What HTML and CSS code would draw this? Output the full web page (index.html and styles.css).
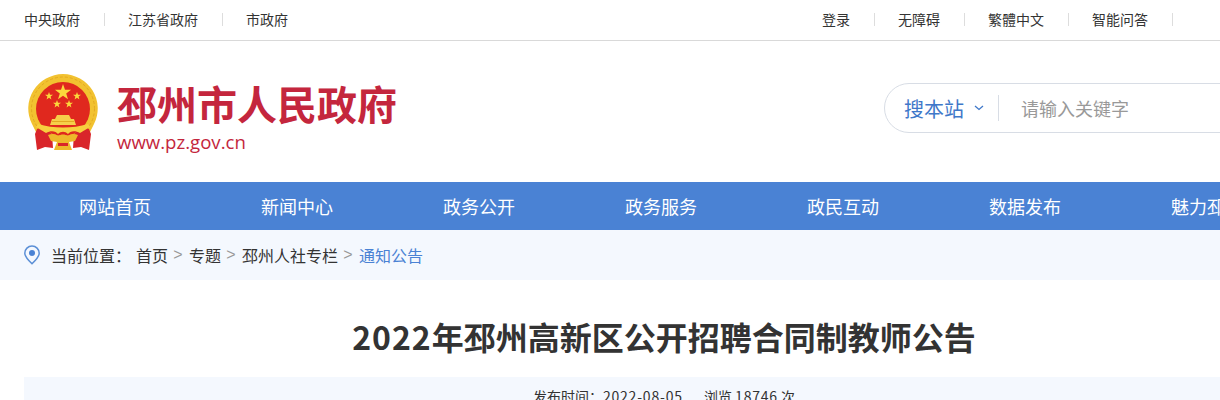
FILE: index.html
```html
<!DOCTYPE html>
<html lang="zh-CN">
<head>
    <meta charset="UTF-8">
    <title>2022年邳州高新区公开招聘合同制教师公告</title>
    <link rel="stylesheet" href="styles.css">
</head>
<body>
    <div class="topbar">
        <div class="wrap topbar-inner">
            <ul class="top-links">
                <li>中央政府</li>
                <li>江苏省政府</li>
                <li>市政府</li>
            </ul>
            <ul class="top-links top-links-right">
                <li>登录</li>
                <li>无障碍</li>
                <li>繁體中文</li>
                <li>智能问答</li>
            </ul>
        </div>
    </div>

    <div class="wrap header">
        <div class="logo">
            <svg class="emblem" viewBox="0 0 70 78" width="70" height="78">
                <path fill="#f2c230" d="M35 0a35 34.500 0 0 1 31 50l-6 12H10L4 50A35 34.500 0 0 1 35 0z"/>
                <circle cx="35" cy="34.500" r="31.500" fill="none" stroke="#e3a922" stroke-width="1" stroke-dasharray="3 2"/>
                <circle cx="35" cy="35" r="27" fill="#e0281e"/>
                <polygon fill="#fbd93c" points="35,10 37,15.800 43.100,15.800 38.200,19.400 40,25.200 35,21.700 30,25.200 31.800,19.400 26.900,15.800 33,15.800"/>
                <polygon fill="#fbd93c" points="21,18 22,20.800 25,20.800 22.600,22.600 23.400,25.500 21,23.800 18.600,25.500 19.400,22.600 17,20.800 20,20.800"/>
                <polygon fill="#fbd93c" points="49,18 50,20.800 53,20.800 50.600,22.600 51.400,25.500 49,23.800 46.600,25.500 47.400,22.600 45,20.800 48,20.800"/>
                <polygon fill="#fbd93c" points="29,26 30,28.800 33,28.800 30.600,30.600 31.400,33.500 29,31.800 26.600,33.500 27.400,30.600 25,28.800 28,28.800"/>
                <polygon fill="#fbd93c" points="41,26 42,28.800 45,28.800 42.600,30.600 43.400,33.500 41,31.800 38.600,33.500 39.400,30.600 37,28.800 40,28.800"/>
                <path fill="#f6cf4a" d="M29 41h12l2 4h3l2 6H22l2-6h3z"/>
                <path fill="#e3a922" d="M24 47h22v1H24z"/>
                <path fill="#d9252a" d="M9 55l6-3 9 8 1 14-8-1-8 3-2-16z"/>
                <path fill="#d9252a" d="M61 55l-6-3-9 8-1 14 8-1 8 3 2-16z"/>
                <path fill="#f7cf3f" d="M10 50c8 2.500 16 3.500 25 3.500S52 52.500 60 50l2 3-10 6c-5-3-10-2-12 1-3-3-7-3-10 0-2-3-7-4-12-1L8 53z"/>
                <path fill="#eeb92a" d="M20 61c4-2 8-1 10 1 3-2 7-2 10 0 2-2 6-3 10-1l-3 6-6 1 3 8H26l3-8-6-1z"/>
                <path fill="#d9252a" d="M30 69h10v3H30z"/>
            </svg>
            <div class="logo-text">
                <div class="site-name">邳州市人民政府</div>
                <div class="site-url">www.pz.gov.cn</div>
            </div>
        </div>
        <div class="search">
            <span class="search-scope">搜本站</span>
            <svg class="chevron" viewBox="0 0 10 6" width="10" height="6">
                <path d="M1 1l4 3.500L9 1" fill="none" stroke="#3f78c9" stroke-width="1.300"/>
            </svg>
            <span class="search-line"></span>
            <span class="search-hint">请输入关键字</span>
        </div>
    </div>

    <div class="nav">
        <ul class="wrap nav-list">
            <li>网站首页</li>
            <li>新闻中心</li>
            <li>政务公开</li>
            <li>政务服务</li>
            <li>政民互动</li>
            <li>数据发布</li>
            <li>魅力邳州</li>
        </ul>
    </div>

    <div class="crumbs">
        <div class="wrap crumbs-inner">
            <svg class="pin" viewBox="0 0 18 20" width="18" height="20">
                <path d="M9 18.800C5 15 1.800 11.800 1.800 8.200a7.200 7.200 0 0 1 14.400 0c0 3.600-3.200 6.800-7.200 10.600z" fill="none" stroke="#5b8fd6" stroke-width="1.500"/>
                <circle cx="9" cy="8" r="3" fill="#4a82d4"/>
            </svg>
            <span class="crumbs-label">当前位置：</span>
            <span>首页</span>
            <span class="gt">&gt;</span>
            <span>专题</span>
            <span class="gt">&gt;</span>
            <span>邳州人社专栏</span>
            <span class="gt">&gt;</span>
            <span class="current">通知公告</span>
        </div>
    </div>

    <div class="wrap article">
        <h1><span class="num">2022</span>年邳州高新区公开招聘合同制教师公告</h1>
        <div class="meta">
            <span>发布时间：<span class="num">2022-08-05</span></span>
            <span>浏览 <span class="num">18746</span> 次</span>
        </div>
    </div>
</body>
</html>
```

FILE: styles.css
```css
* {
    margin: 0;
    padding: 0;
    box-sizing: border-box;
}

html {
    overflow: hidden;
}

body {
    font-family: "Noto Sans CJK SC", "Noto Sans", sans-serif;
    color: #333;
    background: #fff;
}

ul {
    list-style: none;
}

.wrap {
    width: 1280px;
    margin-left: 24px;
}

.topbar {
    height: 41px;
    border-bottom: 1px solid #d9d9d9;
    font-size: 14px;
}

.topbar-inner {
    display: flex;
    justify-content: space-between;
}

.top-links {
    display: flex;
    height: 39px;
    align-items: center;
}

.top-links li {
    line-height: 13px;
    padding: 0 24px;
    margin-right: -1px;
    border-right: 1px solid #ddd;
}

.top-links li:first-child {
    padding-left: 0;
}

.top-links li:last-child {
    border-right: none;
}

.top-links-right {
    padding-right: 132px;
}

.top-links-right li:last-child {
    border-right: 1px solid #ddd;
}

.header {
    height: 141px;
    display: flex;
    justify-content: space-between;
}

.logo {
    display: flex;
    padding: 33px 0 0 4px;
}

.emblem {
    display: block;
}

.logo-text {
    margin-left: 19px;
}

.site-name {
    font-size: 40px;
    font-weight: 700;
    line-height: 48px;
    margin-top: 5px;
    color: #c4263d;
}

.site-url {
    font-family: "Open Sans", sans-serif;
    font-size: 18.6px;
    line-height: 24px;
    margin-top: 3px;
    color: #c4263d;
}

.search {
    width: 420px;
    height: 50px;
    margin-top: 42px;
    border: 1px solid #d8dde5;
    border-radius: 25px;
    display: flex;
    align-items: center;
    padding-left: 19px;
}

.search-scope {
    font-size: 20px;
    color: #3f78c9;
}

.chevron {
    margin-left: 10px;
}

.search-line {
    width: 1px;
    height: 26px;
    background: #d8dde5;
    margin-left: 14px;
}

.search-hint {
    font-size: 18px;
    color: #999;
    margin-left: 22px;
}

.nav {
    height: 48px;
    background: #4a82d4;
}

.nav-list {
    display: flex;
}

.nav-list li {
    width: 182px;
    flex: none;
    line-height: 48px;
    text-align: center;
    font-size: 18px;
    color: #fff;
}

.crumbs {
    height: 50px;
    background: #f4f8fe;
    font-size: 16px;
}

.crumbs-inner {
    height: 50px;
    display: flex;
    align-items: center;
}

.pin {
    margin-left: -1px;
}

.crumbs-label {
    margin-left: 10px;
    margin-right: 5px;
}

.gt {
    color: #999;
    margin: 0 6.3px 0 5.3px;
    font-family: "Liberation Sans", sans-serif;
}

.current {
    color: #4a82d4;
}

.article h1 {
    font-size: 32px;
    font-weight: 700;
    line-height: 48px;
    margin-top: 32px;
    text-align: center;
}

.article h1 .num {
    letter-spacing: 1px;
}

.meta {
    margin-top: 17px;
    padding-top: 9px;
    height: 60px;
    background: #f4f8fe;
    text-align: center;
    font-size: 14px;
}

.meta .num {
    letter-spacing: 0.8px;
}

.meta > span + span {
    margin-left: 18px;
}
```
